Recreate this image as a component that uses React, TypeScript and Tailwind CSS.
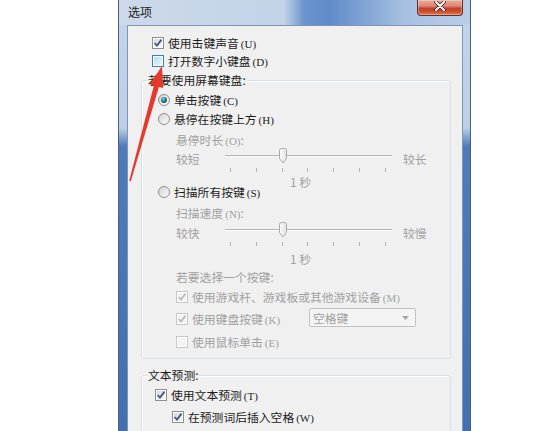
import React from "react";

type CheckState = "on" | "off" | "hover" | "dimOn" | "dimOff";

const TICKS = [0, 1, 2, 3, 4, 5, 6].map((i) => Math.round(5 + i * 25.8));

function Check({ state }: { state: CheckState }) {
  const dim = state === "dimOn" || state === "dimOff";
  const on = state === "on" || state === "dimOn";
  const outer =
    state === "hover" ? "border-[#3c7fb1]" : dim ? "border-[#c6c6c6]" : "border-[#8e8f8f]";
  const inner =
    state === "hover"
      ? "bg-[linear-gradient(135deg,#b3dcf5,#eaf6fd)]"
      : dim
        ? "bg-[#f3f3f3]"
        : "bg-[linear-gradient(135deg,#d6d6d6,#fbfbfb)]";
  const tick = dim ? "#bdbdbd" : state === "on" ? "#44567c" : "#2f4f91";
  return (
    <span className={`flex h-[12px] w-[12px] shrink-0 border bg-white p-[1px] ${outer}`}>
      <span className={`relative h-full w-full ${inner}`}>
        {on ? (
          <svg className="absolute -left-[1px] -top-[1px]" width="10" height="10" viewBox="0 0 10 10">
            <path d="M1.6 5 L4 7.6 L8.5 1.6" fill="none" stroke={tick} strokeWidth="1.8" />
          </svg>
        ) : null}
      </span>
    </span>
  );
}

function Radio({ on }: { on?: boolean }) {
  return (
    <span className="flex h-[12px] w-[12px] shrink-0 items-center justify-center rounded-full border border-[#8e8f8f] bg-[linear-gradient(135deg,#d2d2d2,#fdfdfd)]">
      {on ? (
        <span className="h-[6px] w-[6px] rounded-full bg-[radial-gradient(circle_at_40%_35%,#86cfe6,#1d6381_55%,#0e3b50)]" />
      ) : null}
    </span>
  );
}

function Label({ t, k, dim, tail }: { t: string; k?: string; dim?: boolean; tail?: string }) {
  return (
    <span className={`whitespace-nowrap ${dim ? "text-[#a0a0a0]" : "text-[#1b1b1b]"}`}>
      {t}
      {k ? (
        <span className="ml-[2px] text-[11px] [font-family:'Liberation_Serif',serif]">({k})</span>
      ) : null}
      {tail}
    </span>
  );
}

function Slider({ left, right, mt }: { left: string; right: string; mt: string }) {
  return (
    <div className={`ml-[34px] flex h-[26px] items-start text-[#a0a0a0] ${mt}`}>
      <div className="h-[21px] w-[49px] leading-[21px]">{left}</div>
      <div className="relative h-[26px] w-[167px]">
        <div className="absolute left-0 right-0 top-[7px] h-[2px] border-y border-t-[#b4b4b4] border-b-white" />
        {TICKS.map((x) => (
          <div key={x} className="absolute top-[20px] h-[4px] w-px bg-[#b3b3b3]" style={{ left: x }} />
        ))}
        <svg className="absolute left-[53px] top-0" width="10" height="16" viewBox="0 0 10 16">
          <defs>
            <linearGradient id="th" x1="0" y1="0" x2="1" y2="0">
              <stop offset="0" stopColor="#fbfbfb" />
              <stop offset="1" stopColor="#e2e2e2" />
            </linearGradient>
          </defs>
          <path
            d="M1.5 2.5 Q1.5 0.5 3.5 0.5 H6.5 Q8.5 0.5 8.5 2.5 V10.5 L5 15 L1.5 10.5 Z"
            fill="url(#th)"
            stroke="#a9a9a9"
          />
        </svg>
      </div>
      <div className="ml-[11px] h-[21px] leading-[21px]">{right}</div>
    </div>
  );
}

function Group({ title, className, children }: { title: string; className: string; children: React.ReactNode }) {
  return (
    <div className={`rounded-[3px] border border-[#d5dfe5] shadow-[inset_1px_1px_0_#ffffff] ${className}`}>
      <div className="-mt-[9px] ml-[5px] h-[16px] w-fit bg-[#f0f0f0] px-[1px] leading-[16px] text-[#1b1b1b]">
        {title}
      </div>
      {children}
    </div>
  );
}

export default function App() {
  return (
    <div className="relative flex h-[431px] w-[559px] overflow-hidden bg-white text-[11.8px] leading-[14px] [font-family:'Noto_Sans_CJK_SC',sans-serif]">
      <div className="ml-[118px] flex h-full w-[353px] flex-col border-x border-[#4d5f78] bg-[linear-gradient(180deg,#c4d5ea_0px,#bccfe7_128px,#4f7cb9_146px,#4270b0_100%)]">
        <div className="flex h-[25px] shrink-0 items-start bg-[linear-gradient(90deg,#ccd9e9_0px,#c3d3e8_165px,#6a94ce_185px,#5f8bc9_210px,#a7c0e2_285px,#b9cde6_351px)]">
          <div className="ml-[9px] mt-[4px] text-[12px] leading-[16px] text-[#1e1e1e]">选项</div>
          <div className="flex-1" />
          <div className="mr-[7px] flex h-[16px] w-[46px] justify-center rounded-b-[4px] border border-t-0 border-[#6b2b27] bg-[linear-gradient(180deg,#e8ab9c_0%,#dc8774_40%,#c3402f_56%,#c94a30_75%,#dc8058_100%)] pt-[1px] shadow-[inset_0_0_0_1px_rgba(255,255,255,0.3)]">
            <svg width="12" height="10" viewBox="0 0 12 10">
              <path d="M2 1 L10 9 M10 1 L2 9" stroke="#4a1f1c" strokeWidth="3.6" strokeLinecap="round" />
              <path d="M2 1 L10 9 M10 1 L2 9" stroke="#ffffff" strokeWidth="2" strokeLinecap="round" />
            </svg>
          </div>
        </div>
        <div className="flex min-h-0 flex-1 pl-[8px] pr-[7px]">
          <div className="flex flex-1 flex-col border-x border-t border-[#7f95b3] bg-[#f0f0f0]">
            <div className="ml-[24px] mt-[12px] flex h-[10px] items-center gap-[4px]">
              <Check state="on" />
              <Label t="使用击键声音" k="U" />
            </div>
            <div className="ml-[24px] mt-[8px] flex h-[10px] items-center gap-[4px]">
              <Check state="hover" />
              <Label t="打开数字小键盘" k="D" />
            </div>

            <Group title="若要使用屏幕键盘:" className="ml-[13px] mr-[11px] mt-[14px] pb-[11px]">
              <div className="ml-[16px] mt-[7px] flex h-[10px] items-center gap-[4px]">
                <Radio on />
                <Label t="单击按键" k="C" />
              </div>
              <div className="ml-[16px] mt-[9px] flex h-[10px] items-center gap-[4px]">
                <Radio />
                <Label t="悬停在按键上方" k="H" />
              </div>
              <div className="ml-[34px] mt-[11px] flex h-[10px] items-center">
                <Label t="悬停时长" k="O" tail=":" dim />
              </div>
              <Slider left="较短" right="较长" mt="mt-[3px]" />
              <div className="ml-[148px] mt-[3px] flex h-[10px] items-center text-[#a0a0a0]">1 秒</div>
              <div className="ml-[16px] flex h-[10px] items-center gap-[4px]">
                <Radio />
                <Label t="扫描所有按键" k="S" />
              </div>
              <div className="ml-[34px] mt-[11px] flex h-[10px] items-center">
                <Label t="扫描速度" k="N" tail=":" dim />
              </div>
              <Slider left="较快" right="较慢" mt="mt-[4px]" />
              <div className="ml-[148px] mt-[6px] flex h-[10px] items-center text-[#a0a0a0]">1 秒</div>
              <div className="ml-[34px] mt-[8px] flex h-[10px] items-center text-[#a0a0a0]">若要选择一个按键:</div>
              <div className="ml-[34px] mt-[10px] flex h-[10px] items-center gap-[4px]">
                <Check state="dimOn" />
                <Label t="使用游戏杆、游戏板或其他游戏设备" k="M" dim />
              </div>
              <div className="ml-[34px] mt-[12px] flex h-[10px] items-center gap-[4px]">
                <Check state="dimOn" />
                <span className="w-[113px]">
                  <Label t="使用键盘按键" k="K" dim />
                </span>
                <div className="-mt-[3px] flex h-[19px] w-[107px] items-center justify-between rounded-[2px] border border-[#c3c3c3] bg-[#f4f4f4] pl-[3px] pr-[6px] text-[#a0a0a0]">
                  空格键
                  <svg width="7" height="4" viewBox="0 0 7 4">
                    <path d="M0 0 H7 L3.5 4 Z" fill="#a8a8a8" />
                  </svg>
                </div>
              </div>
              <div className="ml-[34px] mt-[13px] flex h-[10px] items-center gap-[4px]">
                <Check state="dimOff" />
                <Label t="使用鼠标单击" k="E" dim />
              </div>
            </Group>

            <Group title="文本预测:" className="ml-[13px] mr-[11px] mt-[16px] pb-[30px]">
              <div className="ml-[13px] mt-[7px] flex h-[10px] items-center gap-[4px]">
                <Check state="on" />
                <Label t="使用文本预测" k="T" />
              </div>
              <div className="ml-[30px] mt-[12px] flex h-[10px] items-center gap-[4px]">
                <Check state="on" />
                <Label t="在预测词后插入空格" k="W" />
              </div>
            </Group>
          </div>
        </div>
      </div>

      <svg className="pointer-events-none absolute left-0 top-0" width="559" height="431" viewBox="0 0 559 431">
        <polygon
          points="162,66 163.1,88.1 158.9,86.9 130.8,181.2 129.2,180.8 153.9,85.5 149.7,84.3"
          fill="#e5392d"
        />
      </svg>
    </div>
  );
}
